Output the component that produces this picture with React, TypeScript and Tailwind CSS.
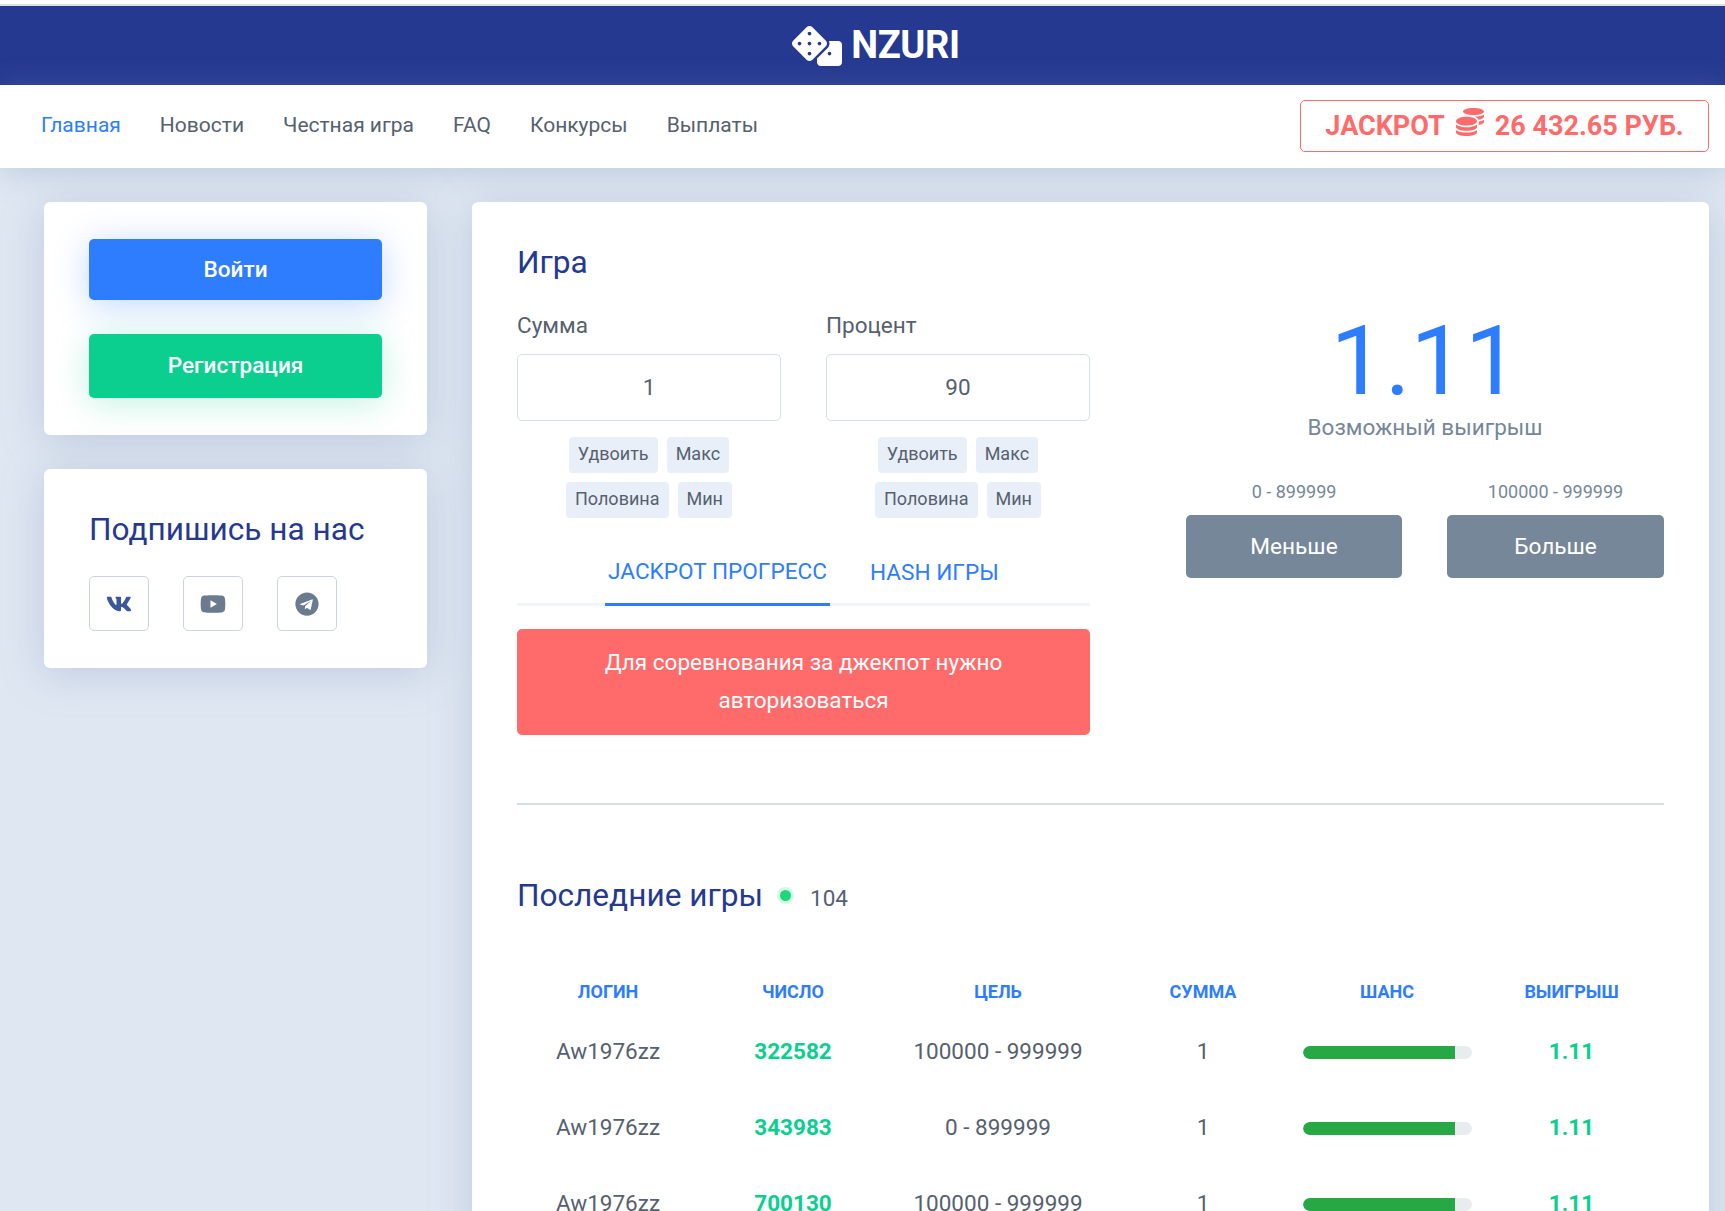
import { FaCoins, FaDice, FaTelegram, FaVk, FaYoutube } from 'react-icons/fa';

const navItems = ['Новости', 'Честная игра', 'FAQ', 'Конкурсы', 'Выплаты'];

const games = [
  { login: 'Aw1976zz', number: '322582', target: '100000 - 999999', sum: '1', win: '1.11' },
  { login: 'Aw1976zz', number: '343983', target: '0 - 899999', sum: '1', win: '1.11' },
  { login: 'Aw1976zz', number: '700130', target: '100000 - 999999', sum: '1', win: '1.11' },
];

const headers = ['ЛОГИН', 'ЧИСЛО', 'ЦЕЛЬ', 'СУММА', 'ШАНС'];

const tableCols = 'grid grid-cols-[182px_188px_222px_188px_180px_187px]';

function Chip({ label }: { label: string }) {
  return (
    <button className="h-[36px] px-[9px] pb-[4px] rounded-[4px] bg-[#e9eff8] text-[18px] text-[#56616f]">
      {label}
    </button>
  );
}

function GameField({ label, value }: { label: string; value: string }) {
  return (
    <div className="w-[264px]">
      <div className="text-[22.5px] leading-[26px] text-[#56616f]">{label}</div>
      <div className="mt-[16px] h-[67px] flex items-center justify-center rounded-[5px] border border-[#d5dfee] text-[22.5px] text-[#56616f]">
        {value}
      </div>
      <div className="mt-[16px] flex justify-center gap-[9px]">
        <Chip label="Удвоить" />
        <Chip label="Макс" />
      </div>
      <div className="mt-[9px] flex justify-center gap-[9px]">
        <Chip label="Половина" />
        <Chip label="Мин" />
      </div>
    </div>
  );
}

function SocialLink({ children }: { children: React.ReactNode }) {
  return (
    <a className="w-[60px] h-[55px] flex items-center justify-center rounded-[5px] border border-[#ccd3e0]">
      {children}
    </a>
  );
}

export default function App() {
  return (
    <div className="h-[1211px] overflow-hidden bg-[#dfe7f2] font-['Roboto',sans-serif]">
      <div className="h-[6px] bg-white border-b-2 border-[#e0e0e0]" />

      {/* Logo */}
      <div className="h-[79px] bg-[#253990] flex items-center justify-center pl-[27px] gap-[9px] text-white">
        <FaDice className="w-[50px] h-[40px]" />
        <span className="text-[38px] font-bold tracking-[-0.4px]">NZURI</span>
      </div>

      {/* Nav */}
      <div className="relative h-[83px] bg-white flex items-center justify-between pl-[41px] pr-[16px] shadow-[0_4px_30px_rgba(130,150,185,0.35)]">
        <div className="flex gap-[39px] pb-[2px] text-[21px] text-[#56616f]">
          <a className="text-[#2e7dff]">Главная</a>
          {navItems.map((item) => (
            <a key={item}>{item}</a>
          ))}
        </div>
        <div className="w-[409px] h-[52px] mb-[2px] pt-[2px] flex items-center justify-center gap-[11px] rounded-[5px] border border-[#ff6b6b] text-[27px] font-bold text-[#ff6b6b]">
          <span>JACKPOT</span>
          <FaCoins className="w-[28px] h-[28px] -mt-[9px]" />
          <span>26 432.65 РУБ.</span>
        </div>
      </div>

      <div className="flex items-start pl-[44px] pt-[34px]">
        {/* Sidebar */}
        <div className="w-[383px] flex flex-col gap-[34px]">
          <div className="h-[233px] px-[45px] pt-[37px] bg-white rounded-[6px] shadow-[0_5px_40px_rgba(130,150,190,0.35)]">
            <button className="w-full h-[61px] pt-[1px] rounded-[5px] bg-[#2e7dff] text-[22.6px] font-medium text-white shadow-[0_5px_35px_rgba(46,125,255,0.3)]">
              Войти
            </button>
            <button className="w-full h-[64px] mt-[34px] rounded-[5px] bg-[#0acf8f] text-[22.6px] font-medium text-white shadow-[0_5px_35px_rgba(10,207,143,0.25)]">
              Регистрация
            </button>
          </div>
          <div className="h-[199px] px-[45px] pt-[42px] bg-white rounded-[6px] shadow-[0_5px_40px_rgba(130,150,190,0.35)]">
            <h3 className="text-[31.6px] leading-[38px] text-[#253990]">Подпишись на нас</h3>
            <div className="mt-[27px] flex gap-[34px]">
              <SocialLink>
                <FaVk className="w-[26px] h-[26px] text-[#3b5998]" />
              </SocialLink>
              <SocialLink>
                <FaYoutube className="w-[26px] h-[26px] text-[#6a7b8f]" />
              </SocialLink>
              <SocialLink>
                <FaTelegram className="w-[24px] h-[24px] text-[#6a7b8f]" />
              </SocialLink>
            </div>
          </div>
        </div>

        {/* Main */}
        <div className="ml-[45px] w-[1237px] h-[1100px] px-[45px] bg-white rounded-[6px] shadow-[0_5px_40px_rgba(130,150,190,0.35)]">
          <div className="flex">
            <div className="w-[573px] pt-[43px]">
              <h2 className="text-[31.6px] leading-[36px] text-[#253990]">Игра</h2>
              <div className="mt-[31px] flex justify-between">
                <GameField label="Сумма" value="1" />
                <GameField label="Процент" value="90" />
              </div>

              <div className="mt-[31px] h-[57px] flex border-b-[3px] border-[#f1f5fb]">
                <div className="h-[57px] w-[225px] ml-[88px] shrink-0 flex items-center justify-center border-b-[3px] border-[#2e7dff] pb-[9px] text-[22.6px] whitespace-nowrap text-[#2e7dff]">
                  JACKPOT ПРОГРЕСС
                </div>
                <div className="h-[54px] ml-[40px] pb-[6px] shrink-0 flex items-center text-[22.6px] whitespace-nowrap text-[#2e7dff]">
                  HASH ИГРЫ
                </div>
              </div>

              <div className="mt-[23px] h-[106px] pb-[2px] flex items-center justify-center rounded-[5px] bg-[#ff6b6b] text-center text-[22.5px] leading-[38px] text-white">
                <p className="w-[420px]">Для соревнования за джекпот нужно авторизоваться</p>
              </div>
            </div>

            <div className="ml-[96px] w-[478px] pt-[117px] flex flex-col items-center">
              <div className="text-[97px] leading-[84px] text-[#2e7dff]">1.11</div>
              <div className="mt-[10px] text-[22.5px] leading-[28px] text-[#768799]">Возможный выигрыш</div>
              <div className="mt-[39px] w-full flex justify-between">
                <div className="w-[216px] text-center">
                  <div className="text-[18px] leading-[24px] text-[#768799]">0 - 899999</div>
                  <button className="mt-[11px] w-full h-[63px] pt-[1px] rounded-[5px] bg-[#768799] text-[22.6px] text-white">
                    Меньше
                  </button>
                </div>
                <div className="w-[217px] text-center">
                  <div className="text-[18px] leading-[24px] text-[#768799]">100000 - 999999</div>
                  <button className="mt-[11px] w-full h-[63px] pt-[1px] rounded-[5px] bg-[#768799] text-[22.6px] text-white">
                    Больше
                  </button>
                </div>
              </div>
            </div>
          </div>

          <div className="mt-[68px] h-[2px] bg-[#d5dfea]" />

          {/* Last games */}
          <div className="mt-[71px] flex items-center">
            <h2 className="text-[31.6px] leading-[36px] text-[#253990]">Последние игры</h2>
            <span className="ml-[17px] w-[11px] h-[11px] rounded-full bg-[#1fd67c] shadow-[0_0_0_3px_rgba(31,214,124,0.2)]" />
            <span className="ml-[19px] mt-[6px] text-[22.5px] text-[#56616f]">104</span>
          </div>

          <div className={`mt-[62px] h-[24px] items-center text-center text-[18px] font-bold text-[#2e7dff] ${tableCols}`}>
            {headers.map((h) => (
              <div key={h}>{h}</div>
            ))}
            <div className="pl-[2px]">ВЫИГРЫШ</div>
          </div>
          <div className="mt-[12px]">
            {games.map((game) => (
              <div key={game.number} className={`h-[76px] items-center text-center text-[22.5px] text-[#56616f] ${tableCols}`}>
                <div>{game.login}</div>
                <div className="font-bold text-[#0acf8f]">{game.number}</div>
                <div>{game.target}</div>
                <div>{game.sum}</div>
                <div className="h-[13px] w-[169px] ml-[6px] mt-[2px] rounded-full overflow-hidden bg-[#e9ecef]">
                  <div className="h-full w-[90%] bg-[#28a745] rounded-l-full" />
                </div>
                <div className="pl-[2px] font-bold text-[#0acf8f]">{game.win}</div>
              </div>
            ))}
          </div>
        </div>
      </div>
    </div>
  );
}
